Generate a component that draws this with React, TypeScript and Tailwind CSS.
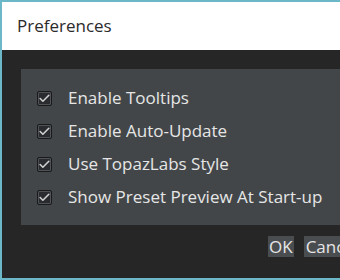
import { Check } from "lucide-react"

const options = [
  "Enable Tooltips",
  "Enable Auto-Update",
  "Use TopazLabs Style",
  "Show Preset Preview At Start-up",
]

function CheckBox() {
  return (
    <span className="flex h-[15px] w-[15px] shrink-0 items-center justify-center rounded-[2px] border border-[#1a1a1a] bg-[#2a2b2e] shadow-[inset_0_0_0_1px_#505356]">
      <Check size={13} strokeWidth={3} className="text-[#cfcfcf]" />
    </span>
  )
}

export default function App() {
  return (
    <div
      className="flex h-[280px] w-[340px] flex-col overflow-hidden border-l-2 border-t-2 border-b-2 border-[#6cb8c9] bg-[#262626]"
      style={{ fontFamily: "'Open Sans', 'Noto Sans', sans-serif" }}
    >
      <div className="flex h-[48px] shrink-0 items-center bg-white pl-[15px] text-[17px] text-[#2b2b2b]">
        Preferences
      </div>
      <div className="flex flex-1 flex-col pl-[19px] pt-[19px]">
        <div className="flex h-[156px] flex-col gap-[11px] bg-[#434649] pl-[16px] pt-[18px]">
          {options.map((label) => (
            <div key={label} className="flex h-[22px] items-center whitespace-nowrap">
              <CheckBox />
              <span className="ml-[16px] text-[17px] text-[#e6e6e6]">{label}</span>
            </div>
          ))}
        </div>
        <div className="flex gap-[10px] pl-[247px] pt-[11px] text-[17px] text-[#e6e6e6]">
          <button className="flex h-[21px] items-center bg-[#4a4d50] px-[1px]">OK</button>
          <button className="flex h-[21px] items-center bg-[#4a4d50] px-[2px] whitespace-nowrap">Cancel</button>
        </div>
      </div>
    </div>
  )
}
